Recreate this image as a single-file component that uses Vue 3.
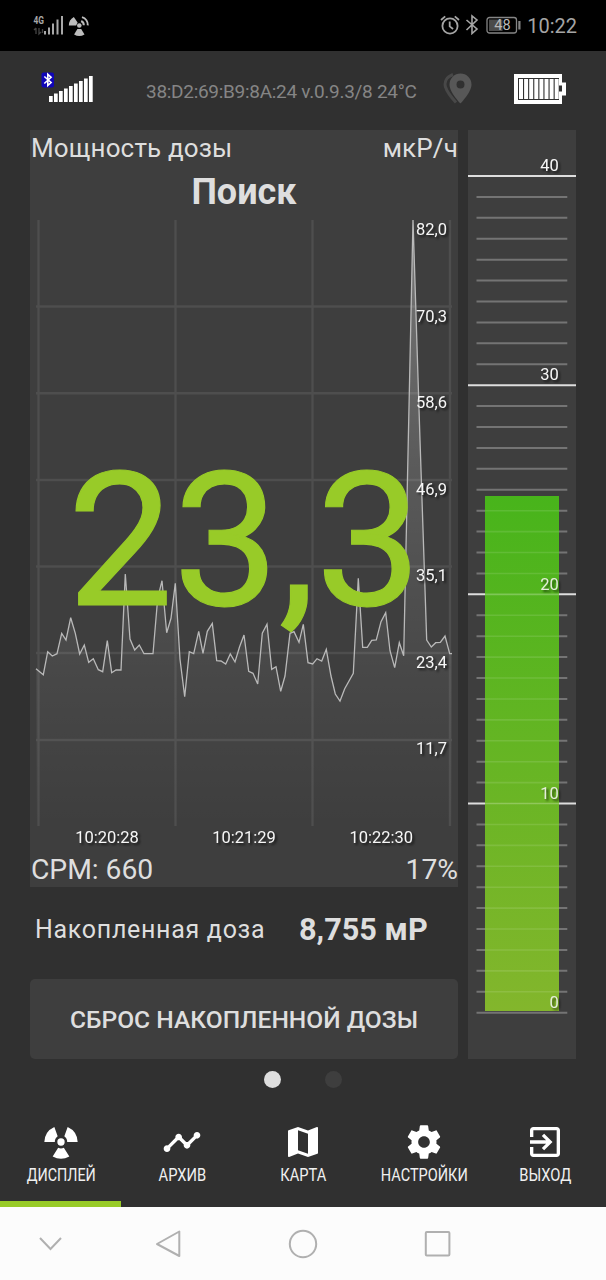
<template>
  <div class="screen">
    <header class="status-bar">
      <svg class="status-left" width="60" height="24" viewBox="0 0 60 24">
        <text class="net-label" x="0.5" y="11" textLength="10.5" lengthAdjust="spacingAndGlyphs">4G</text>
        <path d="M3 15v6M1 17l2-2M6 15v6l2-2M9.5 16v4" fill="none" stroke="#444" stroke-width="1.3" />
        <g fill="#a8a8a8">
          <rect x="11" y="18" width="2" height="3.5" />
          <rect x="15" y="14.5" width="2" height="7" />
          <rect x="19" y="10.5" width="2" height="11" />
          <rect x="23.5" y="6.5" width="2" height="15" />
          <rect x="28" y="3" width="2" height="18.5" />
        </g>
        <g fill="#bdbdbd">
          <circle cx="46.3" cy="12.5" r="2.3" />
          <path d="M35.8 12.6A10 10 0 0 1 40.8 3.9L44.6 9.6 43.2 12.6z" />
          <path d="M44.4 16h3.8l3.3 5.5a10 10 0 0 1-10.4 0z" />
        </g>
        <path d="M48.2 8a4.7 4.7 0 0 1 2.6 4.3M49 4.1a8.3 8.3 0 0 1 5.8 8.3" fill="none" stroke="#bdbdbd" stroke-width="2" />
      </svg>
      <div class="status-right">
        <svg width="20" height="22" viewBox="0 0 20 22" fill="none" stroke="#a5a5a5" stroke-width="1.8">
          <circle cx="10" cy="13" r="7.6" />
          <path d="M9.7 8.6v4.8l3.4 2.6M1 7l4.2-3.6M19 7l-4.2-3.6" />
        </svg>
        <svg class="bt" width="14" height="22" viewBox="0 0 14 22" fill="none" stroke="#a5a5a5" stroke-width="1.6">
          <path d="M1.5 7l10.500 9-5 4.500V3l5 4L1.5 17" />
        </svg>
        <svg class="phone-battery" width="36" height="20" viewBox="0 0 36 20">
          <rect x="1" y="2.5" width="29.5" height="15.5" rx="2.5" fill="none" stroke="#858585" stroke-width="1.3" />
          <rect x="3" y="4.5" width="13.5" height="11.5" fill="#4a4a4a" />
          <rect x="32.3" y="6" width="2.2" height="8.5" fill="#858585" />
          <text class="battery-label" x="16.5" y="15.3" text-anchor="middle">48</text>
        </svg>
        <span class="clock">10:22</span>
      </div>
    </header>

    <section class="device-bar">
      <svg width="54" height="36" viewBox="0 0 54 36">
        <rect x="1.5" y="1.5" width="12.5" height="15" rx="2" fill="#1006b8" />
        <path d="M4.3 5.5l6.8 6-3.3 3V3.3l3.3 3L4.3 12.5" fill="none" stroke="#fff" stroke-width="1.6" />
        <rect
          v-for="n in 9"
          :key="n"
          :x="4 + n * 5"
          :y="31 - n * 2.5 - 3.5"
          width="3.7"
          :height="n * 2.5 + 3.5"
          fill="#fff"
        />
      </svg>
      <span class="device-info">38:D2:69:B9:8A:24 v.0.9.3/8 24°C</span>
      <svg class="pin" width="30" height="34" viewBox="0 0 30 34">
        <path d="M10 2.5C3.5 5 1 10 2.5 15c1.5 5 5.5 10 10.5 15.5" fill="none" stroke="#484848" stroke-width="3" />
        <path fill-rule="evenodd" fill="#575757" d="M17.5 1.5a11 11 0 0 0-11 11c0 8 11 19 11 19s11-11 11-19a11 11 0 0 0-11-11zM17.5 8.5a4 4 0 1 1 0 8 4 4 0 0 1 0-8z" />
      </svg>
      <svg class="battery" width="54" height="32" viewBox="0 0 54 32">
        <path d="M0 1h48v8.5h4v13h-4V31H0z" fill="#fff" />
        <path d="M4 5h41v7.5h3v6h-3V27H4z" fill="#303030" />
        <rect v-for="n in 8" :key="n" :x="n * 5.1 - 0.1" y="6" width="4" height="20" fill="#fff" />
      </svg>
    </section>

    <main class="content">
      <div class="left-column">
        <section class="chart-panel">
          <div class="panel-row panel-head">
            <span>Мощность дозы</span>
            <span>мкР/ч</span>
          </div>
          <h1 class="mode">Поиск</h1>
          <svg class="chart" width="428" height="636" viewBox="30 216 428 636">
            <defs>
              <linearGradient id="area" gradientUnits="userSpaceOnUse" x1="0" y1="220" x2="0" y2="826">
                <stop offset="0" stop-color="#fff" stop-opacity="0.3" />
                <stop offset="0.4" stop-color="#fff" stop-opacity="0.15" />
                <stop offset="0.75" stop-color="#fff" stop-opacity="0.05" />
                <stop offset="1" stop-color="#fff" stop-opacity="0" />
              </linearGradient>
            </defs>
            <g stroke="#4e4e4e" stroke-width="2.4">
              <line v-for="x in gridX" :key="x" :x1="x" :x2="x" y1="220" y2="826" />
              <line v-for="y in gridY" :key="y" :y1="y" :y2="y" x1="36" x2="452" />
            </g>
            <polygon :points="areaPoints" fill="url(#area)" />
            <polyline :points="linePoints" fill="none" stroke="#b9b9b9" stroke-width="1.3" />
            <text class="value" x="67.5" y="605" textLength="354">23,3</text>
            <text v-for="(l, i) in levels" :key="l" class="axis" x="447" :y="235 + i * 86.5" text-anchor="end">{{ l }}</text>
            <text v-for="(t, i) in times" :key="t" class="axis" :x="107 + i * 137.1" y="843" text-anchor="middle">{{ t }}</text>
          </svg>
          <div class="panel-row panel-foot">
            <span>CPM: 660</span>
            <span>17%</span>
          </div>
        </section>

        <div class="total">
          <span class="total-label">Накопленная доза</span>
          <strong class="total-value">8,755 мР</strong>
        </div>

        <button class="reset">СБРОС НАКОПЛЕННОЙ ДОЗЫ</button>
      </div>

      <svg class="gauge" width="108" height="929" viewBox="468 130 108 929">
        <defs>
          <linearGradient id="bar" x1="0" y1="0" x2="0" y2="1">
            <stop offset="0" stop-color="#48b41b" />
            <stop offset="1" stop-color="#83b62c" />
          </linearGradient>
        </defs>
        <line
          v-for="t in ticks"
          :key="t.value"
          :x1="t.major ? 468 : 476.5"
          :x2="t.major ? 576 : 567.3"
          :y1="t.y"
          :y2="t.y"
          :stroke="t.major ? '#dedede' : '#747474'"
          stroke-width="2"
        />
        <rect x="485" y="496" width="74" height="515" fill="url(#bar)" />
        <g stroke="#fff" stroke-width="1.6">
          <line
            v-for="t in coveredTicks"
            :key="t.value"
            x1="485"
            x2="559"
            :y1="t.y"
            :y2="t.y"
            :stroke-opacity="t.major ? 0.25 : 0.11"
          />
        </g>
        <text
          v-for="n in [0, 10, 20, 30, 40]"
          :key="n"
          class="axis"
          :class="{ dim: n < 30 }"
          x="558.7"
          :y="tickY(n) - 4.7"
          text-anchor="end"
        >{{ n }}</text>
      </svg>
    </main>

    <div class="dots">
      <i class="dot active"></i>
      <i class="dot"></i>
    </div>

    <nav class="tabs">
      <div v-for="tab in tabs" :key="tab.label" class="tab" :class="{ current: tab.current }">
        <svg class="tab-icon" width="40" height="40" viewBox="0 0 24 24" fill="#fff">
          <path :d="tab.icon" fill-rule="evenodd" />
        </svg>
        <svg class="tab-label" width="120" height="24">
          <text x="60.3" y="18" text-anchor="middle" :textLength="tab.width" lengthAdjust="spacingAndGlyphs">{{ tab.label }}</text>
        </svg>
      </div>
    </nav>

    <footer class="system-nav">
      <svg width="606" height="73" viewBox="0 0 606 73" fill="none" stroke="#b0b0b0" stroke-width="2">
        <path d="M40 31l10.5 11L61 31" />
        <path d="M179.3 24.5V49L157 37z" stroke-linejoin="round" />
        <circle cx="303" cy="37" r="13.2" />
        <rect x="425.8" y="25" width="23.6" height="23.6" rx="1" />
      </svg>
    </footer>
  </div>
</template>

<script setup>
import { computed } from 'vue'

const gridX = [38.5, 175.5, 312.5, 450]
const gridY = [306.5, 393.2, 480, 566.5, 653, 740]
const levels = ['82,0', '70,3', '58,6', '46,9', '35,1', '23,4', '11,7']
const times = ['10:20:28', '10:21:29', '10:22:30']

const series = [
  [36, 668.7], [43.3, 674.7], [47.7, 651.7], [52.3, 656], [57, 653.7], [61.7, 633.3],
  [66, 640], [70.7, 617.7], [75.3, 633.3], [79.7, 654], [84.3, 645], [88.7, 662.3],
  [93.3, 658.7], [98.3, 669.7], [102.7, 671.7], [107.3, 640.7], [111.7, 672.7], [116, 670],
  [121, 670], [125.3, 574], [130, 639], [134.7, 650], [139.3, 645], [144, 653.7],
  [153, 653.7], [157.7, 598.3], [162, 580.7], [166.7, 632.7], [171, 618.3], [175.3, 583.3],
  [180, 659.3], [184.7, 696.7], [189.3, 651.7], [193.7, 653.7], [198.7, 631.3], [203, 653.3],
  [207.3, 631.3], [212.3, 623.3], [216.7, 660.7], [221, 661], [225.7, 664], [230.3, 654],
  [235, 662], [239.5, 647], [244, 635], [248.7, 671.3], [253, 673.3], [257.7, 684],
  [262.3, 633.3], [267, 624.3], [271.7, 669.3], [276, 666.7], [280.7, 691.3], [285, 676],
  [290, 633.3], [294, 631.7], [299, 642.3], [303.3, 624.3], [308, 662.7], [312.7, 664],
  [317, 658.7], [321.7, 661], [326.3, 649.3], [331, 676], [335.3, 694], [340, 701],
  [344.7, 688.7], [353.3, 673.3], [358.3, 578.3], [362.7, 647.3], [367.3, 647.3], [371.7, 640.3],
  [376.3, 640], [381, 621.7], [385.7, 612.7], [390, 650.7], [394.7, 667.7], [399.3, 642.7],
  [403.7, 655.7], [408.3, 440], [413, 220], [420, 440], [426.7, 640], [431.3, 647],
  [435.7, 642.7], [440.3, 642.3], [445, 636], [449.7, 653.7], [452, 653.7],
]

const linePoints = computed(() => series.map((p) => p.join(',')).join(' '))
const areaPoints = computed(() => `36,826 ${linePoints.value} 452,826`)

function tickY(value) {
  return 1012.7 - value * 20.917
}

const ticks = Array.from({ length: 41 }, (_, value) => ({
  value,
  y: tickY(value),
  major: value > 0 && value % 10 === 0,
}))

// ticks that show through the filled bar
const coveredTicks = ticks.filter((t) => t.y > 496 && t.y < 1011)

const tabs = [
  {
    label: 'ДИСПЛЕЙ',
    width: 69,
    current: true,
    icon: 'M12 9.8a2.2 2.2 0 1 1 0 4.4 2.2 2.2 0 0 1 0-4.4zM2 12A10.3 10.3 0 0 1 8 3l2 5.6A4 4 0 0 0 8.3 12zM22 12A10.3 10.3 0 0 0 16 3l-2 5.6A4 4 0 0 1 15.7 12zM10.3 15.5a4 4 0 0 0 3.4 0L17 20.7a10.3 10.3 0 0 1-10 0z',
  },
  {
    label: 'АРХИВ',
    width: 47.5,
    icon: 'M23 8c0 1.1-.9 2-2 2-.18 0-.35-.02-.51-.07l-3.56 3.55c.05.16.07.34.07.52 0 1.1-.9 2-2 2s-2-.9-2-2c0-.18.02-.36.07-.52l-2.55-2.55c-.16.05-.34.07-.52.07s-.36-.02-.52-.07l-4.55 4.56c.05.16.07.33.07.51 0 1.1-.9 2-2 2s-2-.9-2-2 .9-2 2-2c.18 0 .35.02.51.07l4.56-4.55C8.02 9.36 8 9.18 8 9c0-1.1.9-2 2-2s2 .9 2 2c0 .18-.02.36-.07.52l2.55 2.55c.16-.05.34-.07.52-.07s.36.02.52.07l3.55-3.56C19.02 8.35 19 8.18 19 8c0-1.1.9-2 2-2s2 .9 2 2z',
  },
  {
    label: 'КАРТА',
    width: 46,
    icon: 'M20.5 3l-.16.03L15 5.1 9 3 3.36 4.9c-.21.07-.36.25-.36.48V20.5c0 .28.22.5.5.5l.16-.03L9 18.9l6 2.1 5.64-1.9c.21-.07.36-.25.36-.48V3.5c0-.28-.22-.5-.5-.5zM15 19l-6-2.11V5l6 2.11V19z',
  },
  {
    label: 'НАСТРОЙКИ',
    width: 87,
    icon: 'M19.43 12.98c.04-.32.07-.64.07-.98s-.03-.66-.07-.98l2.11-1.65c.19-.15.24-.42.12-.64l-2-3.46c-.12-.22-.39-.3-.61-.22l-2.49 1c-.52-.4-1.08-.73-1.69-.98l-.38-2.65C14.46 2.18 14.25 2 14 2h-4c-.25 0-.46.18-.49.42l-.38 2.65c-.61.25-1.17.59-1.69.98l-2.49-1c-.23-.09-.49 0-.61.22l-2 3.46c-.13.22-.07.49.12.64l2.11 1.65c-.04.32-.07.65-.07.98s.03.66.07.98l-2.11 1.65c-.19.15-.24.42-.12.64l2 3.46c.12.22.39.3.61.22l2.49-1c.52.4 1.08.73 1.69.98l.38 2.65c.03.24.24.42.49.42h4c.25 0 .46-.18.49-.42l.38-2.65c.61-.25 1.17-.59 1.69-.98l2.49 1c.23.09.49 0 .61-.22l2-3.46c.12-.22.07-.49-.12-.64l-2.11-1.65zM12 15.5c-1.93 0-3.5-1.57-3.5-3.5s1.57-3.5 3.5-3.5 3.5 1.57 3.5 3.5-1.57 3.5-3.5 3.5z',
  },
  {
    label: 'ВЫХОД',
    width: 52,
    icon: 'M10.09 15.59L11.5 17l5-5-5-5-1.41 1.41L12.67 11H3v2h9.67l-2.58 2.59zM19 3H5c-1.11 0-2 .9-2 2v4h2V5h14v14H5v-4H3v4c0 1.1.89 2 2 2h14c1.1 0 2-.9 2-2V5c0-1.1-.9-2-2-2z',
  },
]
</script>

<style>
body {
  margin: 0;
  background: #303030;
}
</style>

<style scoped>
.screen {
  display: flex;
  flex-direction: column;
  width: 606px;
  height: 1280px;
  overflow: hidden;
  background: #303030;
  color: #dedede;
  font-family: Roboto, "Liberation Sans", sans-serif;
}

svg {
  display: block;
  flex: none;
}

.status-bar {
  display: flex;
  justify-content: space-between;
  box-sizing: border-box;
  height: 51px;
  padding: 13px 29px 0 33px;
  background: #000;
}

.net-label {
  font-size: 11.5px;
  font-weight: 700;
  fill: #a8a8a8;
}

.status-right {
  display: flex;
  align-items: flex-start;
}

.bt {
  margin: 0 7px 0 5px;
}

.phone-battery {
  margin: 2px 5px 0 0;
}

.battery-label {
  font-size: 14.5px;
  fill: #b8b8b8;
}

.clock {
  font-size: 20px;
  line-height: 26px;
  color: #a5a5a5;
}

.device-bar {
  display: flex;
  align-items: flex-start;
  box-sizing: border-box;
  height: 79px;
  padding: 20px 40px 0;
}

.device-info {
  width: 272px;
  margin: 8px 0 0 52px;
  font-size: 19px;
  line-height: 26px;
  letter-spacing: -0.29px;
  white-space: nowrap;
  color: #858585;
}

.pin {
  margin: 1px 0 0 26px;
}

.battery {
  margin: 2px 0 0 41px;
}

.content {
  display: flex;
  gap: 10px;
  height: 929px;
  padding-left: 30px;
}

.left-column {
  display: flex;
  flex-direction: column;
  width: 428px;
}

.chart-panel {
  height: 757px;
  background: #3e3e3e;
}

.panel-row {
  display: flex;
  justify-content: space-between;
  padding-left: 1px;
  font-size: 26px;
  line-height: 36px;
  letter-spacing: 0.15px;
  white-space: nowrap;
}

.panel-head {
  height: 37px;
}

.mode {
  height: 49px;
  margin: 0;
  font-size: 36px;
  line-height: 50px;
  text-align: center;
}

.panel-foot {
  font-size: 28.3px;
  letter-spacing: -0.05px;
}

.value {
  font-size: 188px;
  fill: #98cb28;
  stroke: #98cb28;
  stroke-width: 1.2px;
}

.axis {
  font-size: 16.5px;
  fill: #f6f6f6;
  filter: drop-shadow(2px 2px 1px rgba(0, 0, 0, 0.6));
}

.axis.dim {
  fill: #e4edda;
}

.total {
  display: flex;
  align-items: center;
  box-sizing: border-box;
  height: 92px;
  padding: 0 0 8px 5px;
  white-space: nowrap;
}

.total-label {
  width: 264px;
  font-size: 25px;
  letter-spacing: 0.7px;
}

.total-value {
  font-size: 30.7px;
}

.reset {
  height: 80px;
  padding: 0;
  border: 0;
  border-radius: 5px;
  background: #3e3e3e;
  color: #dedede;
  font-family: inherit;
  font-size: 24.6px;
  font-weight: 500;
  white-space: nowrap;
}

.gauge {
  background: #3e3e3e;
}

.dots {
  display: flex;
  gap: 44px;
  height: 43px;
  padding: 12px 0 0 264px;
  box-sizing: border-box;
}

.dot {
  width: 17px;
  height: 17px;
  border-radius: 50%;
  background: #3e3e3e;
}

.dot.active {
  background: #dedede;
}

.tabs {
  display: flex;
  height: 105px;
}

.tab {
  display: flex;
  flex: 1;
  flex-direction: column;
  align-items: center;
  box-sizing: border-box;
  padding-top: 20px;
}

.tab.current {
  border-bottom: 6px solid #98cb28;
}

.tab-label {
  margin-top: 1px;
  overflow: visible;
  font-size: 18px;
  fill: #f0f0f0;
}

.system-nav {
  height: 73px;
  background: #fcfcfc;
}
</style>
